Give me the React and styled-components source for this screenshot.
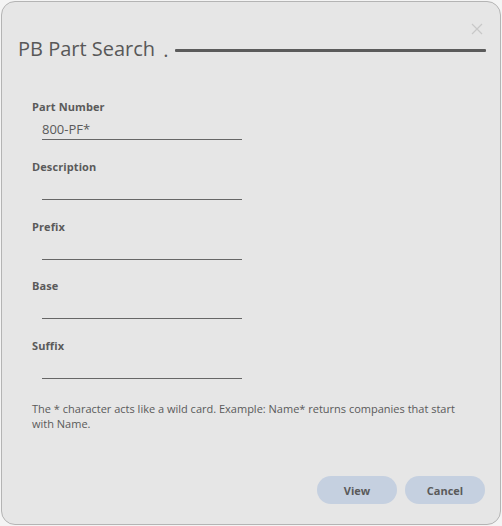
import React from "react";
import styled, { createGlobalStyle } from "styled-components";

const GlobalStyle = createGlobalStyle`
  html, body {
    margin: 0;
    padding: 0;
    background: #f4f4f4;
    font-family: "Open Sans", "Noto Sans", sans-serif;
  }
`;

const Dialog = styled.div`
  position: relative;
  box-sizing: border-box;
  width: 500px;
  height: 524px;
  margin: 1px 0 0 1px;
  background: #e6e6e6;
  border: 1px solid #b4b4b4;
  border-radius: 14px;
  display: flex;
  flex-direction: column;
`;

const Header = styled.div`
  display: flex;
  align-items: center;
  padding: 33px 14px 0 16px;
`;

const Title = styled.h2`
  margin: 0;
  font-size: 20px;
  font-weight: 400;
  line-height: 28px;
  color: #585858;
  white-space: nowrap;
`;

const Dot = styled.span`
  font-size: 20px;
  line-height: 28px;
  color: #585858;
  margin: 0 7px 0 8px;
  position: relative;
  top: 1px;
`;

const Rule = styled.div`
  flex: 1;
  height: 3px;
  margin-top: 3px;
  background: #5b5b5b;
  border-radius: 1px;
`;

const Close = styled.button`
  position: absolute;
  top: 20px;
  right: 16px;
  width: 14px;
  height: 14px;
  padding: 0;
  border: none;
  background: transparent;
  cursor: pointer;
  display: flex;
`;

const Form = styled.div`
  display: flex;
  flex-direction: column;
  gap: 18.75px;
  padding: 36px 0 0 30px;
`;

const Field = styled.div`
  display: flex;
  flex-direction: column;
`;

const Label = styled.label`
  font-size: 11px;
  font-weight: 700;
  line-height: 16px;
  color: #5a5a5a;
  letter-spacing: 0.1px;
`;

const Input = styled.input`
  box-sizing: content-box;
  width: 200px;
  height: 20px;
  margin: 4px 0 0 10px;
  padding: 0;
  border: none;
  border-bottom: 1px solid #666;
  background: transparent;
  font-family: "Open Sans", sans-serif;
  font-size: 13px;
  color: #5a5a5a;
  outline: none;
`;

const Help = styled.p`
  margin: 22px 30px 0 30px;
  font-size: 11px;
  line-height: 15px;
  color: #5a5a5a;
`;

const Footer = styled.div`
  margin-top: auto;
  display: flex;
  justify-content: flex-end;
  gap: 8px;
  padding: 0 15px 20px 0;
`;

const Button = styled.button`
  width: 80px;
  height: 28px;
  border: none;
  border-radius: 14px;
  background: #c5d0e0;
  font-family: "Open Sans", sans-serif;
  font-size: 11px;
  font-weight: 700;
  color: #5a5a5a;
  cursor: pointer;
`;

const fields = [
  { label: "Part Number", value: "800-PF*" },
  { label: "Description", value: "" },
  { label: "Prefix", value: "" },
  { label: "Base", value: "" },
  { label: "Suffix", value: "" },
];

export default function App() {
  return (
    <>
      <GlobalStyle />
      <Dialog>
        <Close aria-label="Close">
          <svg width="14" height="14" viewBox="0 0 14 14">
            <path d="M2 2 L12 12 M12 2 L2 12" stroke="#c8c8c8" strokeWidth="1.2" />
          </svg>
        </Close>
        <Header>
          <Title>PB Part Search</Title>
          <Dot>.</Dot>
          <Rule />
        </Header>
        <Form>
          {fields.map((f) => (
            <Field key={f.label}>
              <Label>{f.label}</Label>
              <Input defaultValue={f.value} />
            </Field>
          ))}
        </Form>
        <Help>
          The * character acts like a wild card. Example: Name* returns companies that start with Name.
        </Help>
        <Footer>
          <Button>View</Button>
          <Button>Cancel</Button>
        </Footer>
      </Dialog>
    </>
  );
}
